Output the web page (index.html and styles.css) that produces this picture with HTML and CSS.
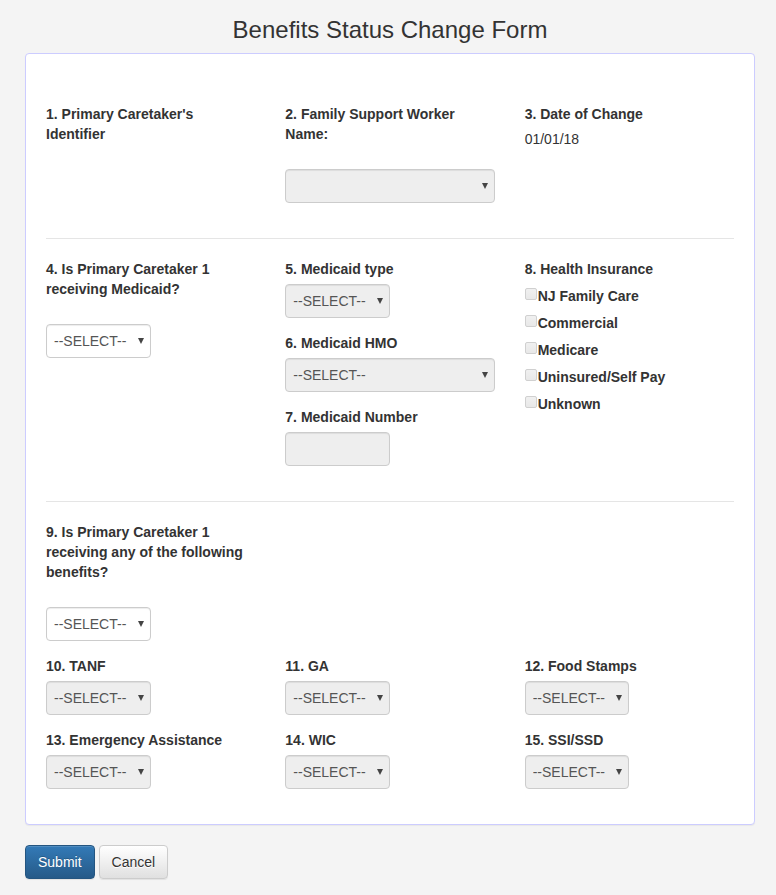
FILE: index.html
```html
<!DOCTYPE html>
<html lang="en">
<head>
<meta charset="utf-8">
<meta name="viewport" content="width=device-width, initial-scale=1">
<title>Benefits Status Change Form</title>
<link rel="stylesheet" href="styles.css">
</head>
<body>
<main class="page">
  <h1 class="title">Benefits Status Change Form</h1>
  <form>
    <div class="card">
      <section class="row">
        <div class="field">
          <span class="label">1. Primary Caretaker's Identifier</span>
        </div>
        <div class="field">
          <label class="label label-spaced" for="worker">2. Family Support Worker Name:</label>
          <select class="control" id="worker" disabled><option></option></select>
        </div>
        <div class="field">
          <span class="label">3. Date of Change</span>
          <span>01/01/18</span>
        </div>
      </section>
      <hr class="divider">
      <section class="row">
        <div class="field">
          <label class="label label-spaced" for="medicaid">4. Is Primary Caretaker 1 receiving Medicaid?</label>
          <select class="control half" id="medicaid"><option>--SELECT--</option></select>
        </div>
        <div class="stack">
          <div class="field">
            <label class="label" for="type">5. Medicaid type</label>
            <select class="control half" id="type" disabled><option>--SELECT--</option></select>
          </div>
          <div class="field">
            <label class="label" for="hmo">6. Medicaid HMO</label>
            <select class="control" id="hmo" disabled><option>--SELECT--</option></select>
          </div>
          <div class="field">
            <label class="label" for="number">7. Medicaid Number</label>
            <input class="control half" id="number" type="text" disabled>
          </div>
        </div>
        <fieldset class="checks">
          <legend class="label">8. Health Insurance</legend>
          <label class="check"><input type="checkbox" disabled>NJ Family Care</label>
          <label class="check"><input type="checkbox" disabled>Commercial</label>
          <label class="check"><input type="checkbox" disabled>Medicare</label>
          <label class="check"><input type="checkbox" disabled>Uninsured/Self Pay</label>
          <label class="check"><input type="checkbox" disabled>Unknown</label>
        </fieldset>
      </section>
      <hr class="divider">
      <section class="row">
        <div class="field">
          <label class="label label-spaced" for="benefits">9. Is Primary Caretaker 1 receiving any of the following benefits?</label>
          <select class="control half" id="benefits"><option>--SELECT--</option></select>
        </div>
        <div class="field new-line">
          <label class="label" for="tanf">10. TANF</label>
          <select class="control half" id="tanf" disabled><option>--SELECT--</option></select>
        </div>
        <div class="field">
          <label class="label" for="ga">11. GA</label>
          <select class="control half" id="ga" disabled><option>--SELECT--</option></select>
        </div>
        <div class="field">
          <label class="label" for="stamps">12. Food Stamps</label>
          <select class="control half" id="stamps" disabled><option>--SELECT--</option></select>
        </div>
        <div class="field">
          <label class="label" for="emergency">13. Emergency Assistance</label>
          <select class="control half" id="emergency" disabled><option>--SELECT--</option></select>
        </div>
        <div class="field">
          <label class="label" for="wic">14. WIC</label>
          <select class="control half" id="wic" disabled><option>--SELECT--</option></select>
        </div>
        <div class="field">
          <label class="label" for="ssi">15. SSI/SSD</label>
          <select class="control half" id="ssi" disabled><option>--SELECT--</option></select>
        </div>
      </section>
    </div>
    <div class="actions">
      <button class="btn btn-primary" type="submit">Submit</button>
      <button class="btn" type="button">Cancel</button>
    </div>
  </form>
</main>
</body>
</html>
```

FILE: styles.css
```css
* {
  box-sizing: border-box;
}

body {
  margin: 0;
  background: #f4f4f4;
  color: #333;
  font: 14px/20px "Liberation Sans", Arial, sans-serif;
}

.page {
  padding: 17px 21px 16px 25px;
}

.title {
  margin: 0 0 10px;
  font-size: 24px;
  line-height: 26px;
  font-weight: 400;
  text-align: center;
}

.card {
  padding: 50px 20px 35px;
  background: #fff;
  border: 1px solid #ccf;
  border-radius: 4px;
  box-shadow: 0 1px 1px rgba(0, 0, 0, 0.05);
}

.row {
  display: grid;
  grid-template-columns: repeat(3, minmax(0, 1fr));
  gap: 15px 30px;
}

.stack {
  display: grid;
  gap: 15px;
}

.new-line {
  grid-column: 1;
}

.label {
  display: block;
  margin-bottom: 5px;
  padding: 0;
  font-weight: 700;
}

.label-spaced {
  margin-bottom: 25px;
}

.divider {
  height: 1px;
  margin: 35px 0 20px;
  border: 0;
  background: #e5e5e5;
}

.control {
  display: block;
  appearance: none;
  width: 100%;
  height: 34px;
  margin: 0;
  padding: 6px 7px;
  color: #555;
  background-color: #fff;
  border: 1px solid #ccc;
  border-radius: 4px;
  box-shadow: inset 0 1px 1px rgba(0, 0, 0, 0.075);
  font: inherit;
}

.half {
  width: 50%;
}

select.control {
  background-image: url("data:image/svg+xml,%3Csvg xmlns='http://www.w3.org/2000/svg' width='6' height='6'%3E%3Cpath d='M0 0h6L3 6z' fill='%23444'/%3E%3C/svg%3E");
  background-repeat: no-repeat;
  background-position: right 6px top 13px;
}

.control:disabled {
  background-color: #eee;
  opacity: 1;
}

.checks {
  min-width: 0;
  margin: 0;
  padding: 0;
  border: 0;
}

.check {
  display: flex;
  align-items: flex-start;
  gap: 1px;
  margin-bottom: 5px;
  padding-top: 2px;
  font-weight: 700;
}

.check input {
  appearance: none;
  flex: none;
  width: 12px;
  height: 12px;
  margin: 2px 0 0;
  background: linear-gradient(#f0f0f0, #e8e8e8);
  border: 1px solid #d0d0d0;
  border-radius: 2px;
}

.check input:checked {
  background: #555;
}

.actions {
  display: flex;
  gap: 4px;
  margin-top: 20px;
}

.btn {
  padding: 6px 12px;
  color: #333;
  background: linear-gradient(#fff, #e0e0e0);
  border: 1px solid #ccc;
  border-radius: 4px;
  box-shadow: inset 0 1px 0 rgba(255, 255, 255, 0.15), 0 1px 1px rgba(0, 0, 0, 0.075);
  font: inherit;
  text-shadow: 0 1px 0 #fff;
}

.btn-primary {
  color: #fff;
  background: linear-gradient(#337ab7, #265a88);
  border-color: #245580;
  text-shadow: 0 -1px 0 rgba(0, 0, 0, 0.2);
}
```
